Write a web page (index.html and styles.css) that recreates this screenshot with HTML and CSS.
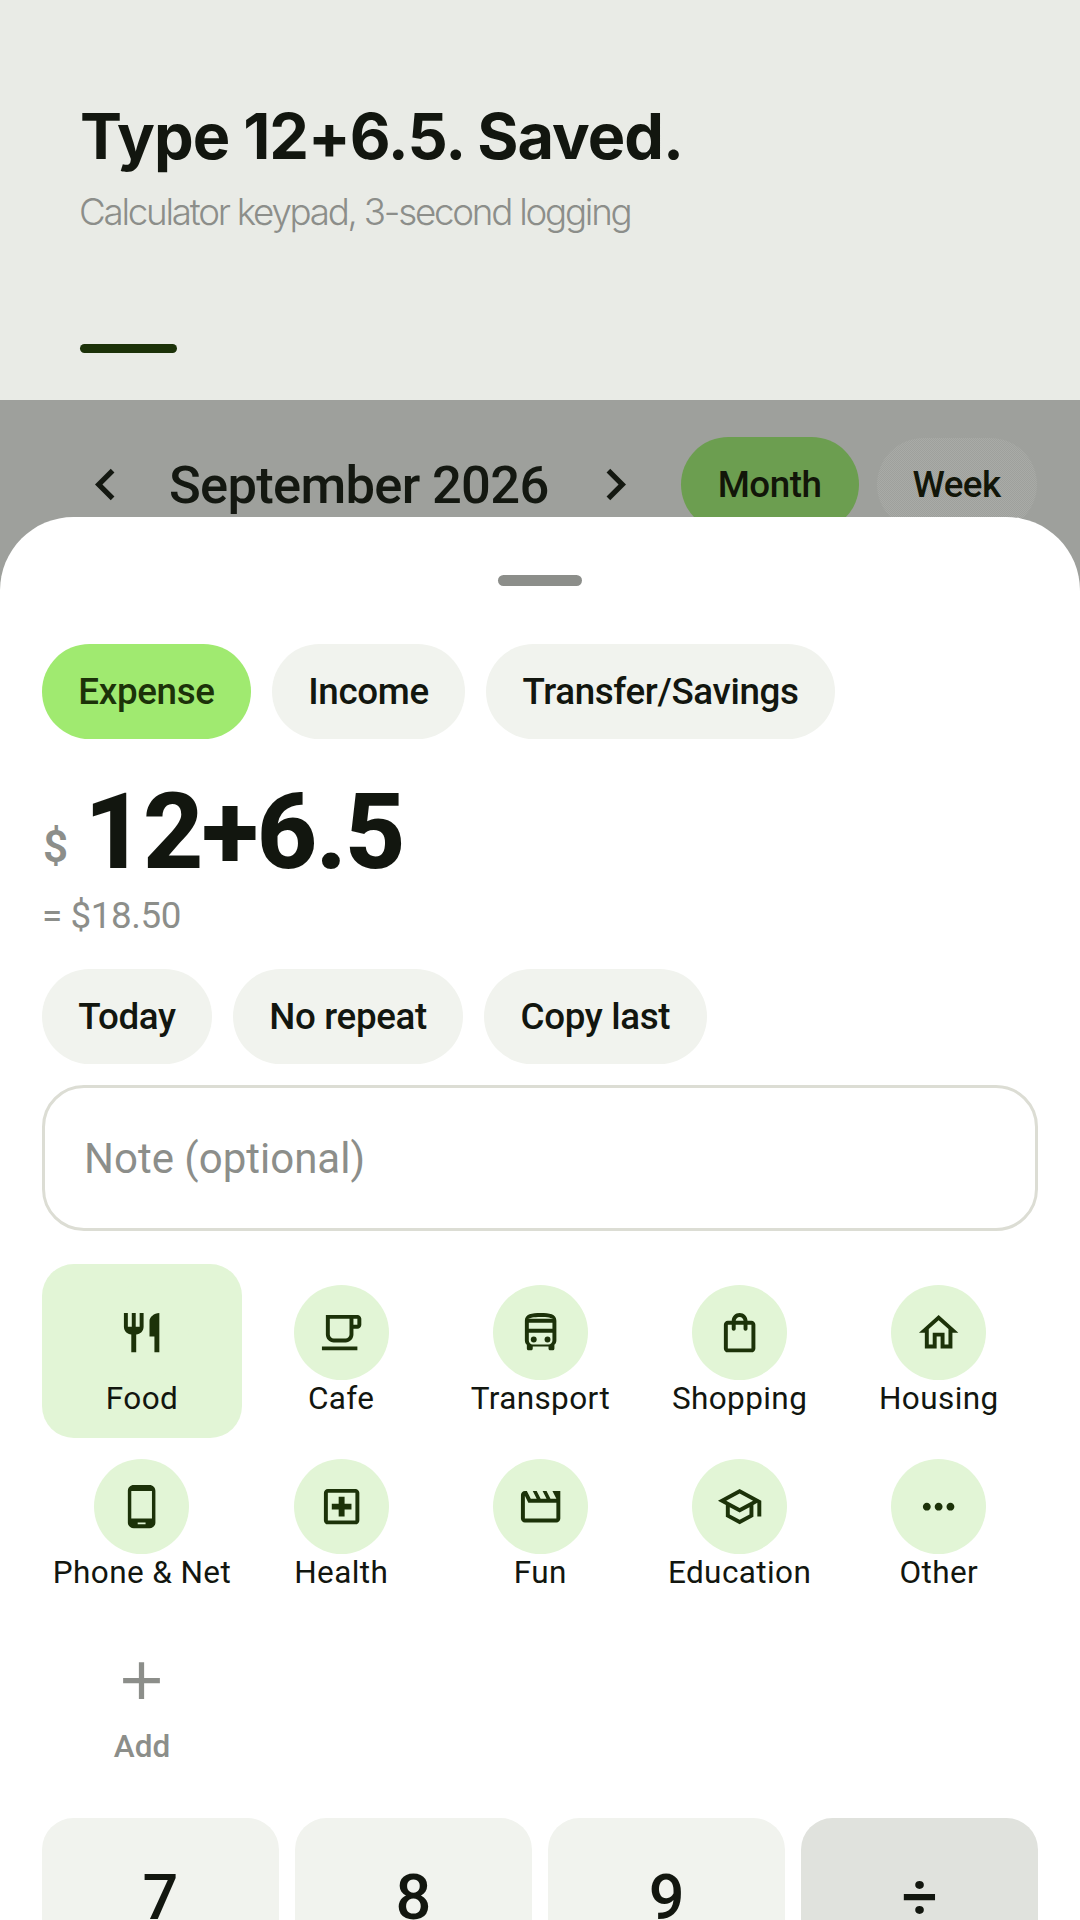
FILE: index.html
```html
<!DOCTYPE html>
<html lang="en">
<head>
<meta charset="utf-8">
<title>Type 12+6.5. Saved.</title>
<link rel="stylesheet" href="styles.css">
</head>
<body>
<div class="screen">
  <header class="hero">
    <h1 class="hero-title">Type 12+6.5. Saved.</h1>
    <p class="hero-sub">Calculator keypad, 3-second logging</p>
    <div class="hero-bar"></div>
  </header>
  <div class="stage">
    <div class="toolbar">
      <svg class="chev" viewBox="0 0 24 24"><path d="M15.41 7.41L14 6l-6 6 6 6 1.41-1.41L10.83 12z"/></svg>
      <span class="month-title">September 2026</span>
      <svg class="chev" viewBox="0 0 24 24"><path d="M10 6L8.59 7.41 13.17 12l-4.58 4.59L10 18l6-6z"/></svg>
      <span class="seg seg-on">Month</span>
      <span class="seg seg-off">Week</span>
    </div>
    <section class="sheet">
      <div class="handle"></div>
      <div class="chips">
        <span class="chip chip-on">Expense</span>
        <span class="chip">Income</span>
        <span class="chip">Transfer/Savings</span>
      </div>
      <div class="amount"><span class="cur">$</span><span class="expr">12+6.5</span></div>
      <div class="result">= $18.50</div>
      <div class="chips chips-meta">
        <span class="chip">Today</span>
        <span class="chip">No repeat</span>
        <span class="chip">Copy last</span>
      </div>
      <div class="note">Note (optional)</div>
      <div class="cats">
        <div class="cat cat-on">
          <span class="cat-ic"><svg viewBox="0 0 24 24"><path d="M11 9H9V2H7v7H5V2H3v7c0 2.12 1.66 3.84 3.75 3.97V22h2.5v-9.03C11.34 12.84 13 11.12 13 9V2h-2v7zm5-3v8h2.5v8H21V2c-2.76 0-5 2.24-5 4z"/></svg></span>
          <span class="cat-name">Food</span>
        </div>
        <div class="cat">
          <span class="cat-ic"><svg viewBox="0 0 24 24"><path d="M20 3H4v10c0 2.21 1.79 4 4 4h6c2.21 0 4-1.79 4-4v-3h2c1.11 0 2-.9 2-2V5c0-1.11-.89-2-2-2zm-4 10c0 1.1-.9 2-2 2H8c-1.1 0-2-.9-2-2V5h10v8zm4-5h-2V5h2v3zM2 19h18v2H2z"/></svg></span>
          <span class="cat-name">Cafe</span>
        </div>
        <div class="cat">
          <span class="cat-ic"><svg viewBox="0 0 24 24"><path fill-rule="evenodd" d="M4 16c0 .88.39 1.67 1 2.22V20c0 .55.45 1 1 1h1c.55 0 1-.45 1-1v-1h8v1c0 .55.45 1 1 1h1c.55 0 1-.45 1-1v-1.78c.61-.55 1-1.34 1-2.22V6c0-3.5-3.58-4-8-4s-8 .5-8 4v10zM12 4c3.69 0 5.61.46 6.33 1H5.67c.72-.54 2.64-1 6.33-1zM6 7h12v3H6zM6 12h12v4c0 1.1-.9 2-2 2H8c-1.1 0-2-.9-2-2z"/><circle cx="8.5" cy="15.5" r="1.5"/><circle cx="15.5" cy="15.5" r="1.5"/></svg></span>
          <span class="cat-name">Transport</span>
        </div>
        <div class="cat">
          <span class="cat-ic"><svg viewBox="0 0 24 24"><path d="M18 6h-2c0-2.21-1.79-4-4-4S8 3.79 8 6H6c-1.1 0-2 .9-2 2v12c0 1.1.9 2 2 2h12c1.1 0 2-.9 2-2V8c0-1.1-.9-2-2-2zm-6-2c1.1 0 2 .9 2 2h-4c0-1.1.9-2 2-2zm6 16H6V8h2v2c0 .55.45 1 1 1s1-.45 1-1V8h4v2c0 .55.45 1 1 1s1-.45 1-1V8h2v12z"/></svg></span>
          <span class="cat-name">Shopping</span>
        </div>
        <div class="cat">
          <span class="cat-ic"><svg viewBox="0 0 24 24"><path d="M12 5.69l5 4.5V18h-2v-6H9v6H7v-7.81l5-4.5M12 3L2 12h3v8h6v-6h2v6h6v-8h3L12 3z"/></svg></span>
          <span class="cat-name">Housing</span>
        </div>
        <div class="cat">
          <span class="cat-ic"><svg viewBox="0 0 24 24"><path d="M16 1H8C6.34 1 5 2.34 5 4v16c0 1.66 1.34 3 3 3h8c1.66 0 3-1.34 3-3V4c0-1.66-1.34-3-3-3zm-2 20h-4v-1h4v1zm3.25-3H6.75V4h10.5v14z"/></svg></span>
          <span class="cat-name">Phone &amp; Net</span>
        </div>
        <div class="cat">
          <span class="cat-ic"><svg viewBox="0 0 24 24"><path d="M19 3H5c-1.1 0-1.99.9-1.99 2L3 19c0 1.1.9 2 2 2h14c1.1 0 2-.9 2-2V5c0-1.1-.9-2-2-2zm0 16H5V5h14v14z"/><path d="M10.5 17h3v-3.5H17v-3h-3.5V7h-3v3.5H7v3h3.5z"/></svg></span>
          <span class="cat-name">Health</span>
        </div>
        <div class="cat">
          <span class="cat-ic"><svg viewBox="0 0 24 24"><path d="M4 6.47L5.76 10H20v8H4V6.47M22 4h-4l2 4h-3l-2-4h-2l2 4h-3l-2-4H8l2 4H7L5 4H4c-1.1 0-1.99.9-1.99 2L2 18c0 1.1.9 2 2 2h16c1.1 0 2-.9 2-2V4z"/></svg></span>
          <span class="cat-name">Fun</span>
        </div>
        <div class="cat">
          <span class="cat-ic"><svg viewBox="0 0 24 24"><path d="M12 3L1 9l4 2.18v6L12 21l7-3.82v-6l2-1.09V17h2V9L12 3zm6.82 6L12 12.72 5.18 9 12 5.28 18.82 9zM17 15.99l-5 2.73-5-2.73v-3.72L12 15l5-2.73v3.72z"/></svg></span>
          <span class="cat-name">Education</span>
        </div>
        <div class="cat">
          <span class="cat-ic"><svg viewBox="0 0 24 24"><path d="M6 10c-1.1 0-2 .9-2 2s.9 2 2 2 2-.9 2-2-.9-2-2-2zm12 0c-1.1 0-2 .9-2 2s.9 2 2 2 2-.9 2-2-.9-2-2-2zm-6 0c-1.1 0-2 .9-2 2s.9 2 2 2 2-.9 2-2-.9-2-2-2z"/></svg></span>
          <span class="cat-name">Other</span>
        </div>
        <div class="cat cat-add">
          <span class="cat-ic cat-ic-add"><svg viewBox="0 0 24 24"><path d="M19 13h-6v6h-2v-6H5v-2h6V5h2v6h6v2z"/></svg></span>
          <span class="cat-name">Add</span>
        </div>
      </div>
      <div class="keys">
        <span class="key">7</span>
        <span class="key">8</span>
        <span class="key">9</span>
        <span class="key key-op">÷</span>
      </div>
    </section>
  </div>
</div>
</body>
</html>
```

FILE: styles.css
```css
* { box-sizing: border-box; }
html, body { margin: 0; padding: 0; }
body { width: 1080px; height: 1920px; overflow: hidden; background: #fff; font-family: Roboto, "Liberation Sans", sans-serif; color: #12160f; }
.screen { width: 1080px; height: 1920px; display: flex; flex-direction: column; overflow: hidden; }

.hero { height: 400px; flex: none; background: #e9ebe6; padding: 100px 80px 0; display: flex; flex-direction: column; font-family: Inter, "Liberation Sans", sans-serif; }
.hero-title { margin: 0; font-size: 63px; line-height: 73px; font-weight: 700; letter-spacing: -1px; color: #12160f; }
.hero-sub { margin: 17px 0 0 -1px; font-size: 36.75px; line-height: 44px; font-weight: 300; letter-spacing: -2.25px; color: #8c8e8a; }
.hero-bar { width: 97px; height: 9px; border-radius: 5px; background: #1c3209; margin-top: 110px; }

.stage { position: relative; flex: 1; background: #9ea09c; overflow: hidden; }
.toolbar { height: 95px; margin-top: 37px; padding-left: 74px; display: flex; align-items: center; }
.chev { width: 63px; height: 63px; flex: none; fill: #141811; }
.month-title { font-size: 52.5px; font-weight: 500; letter-spacing: -0.7px; margin: 0 35px 0 32px; color: #141811; white-space: nowrap; }
.seg { height: 95px; border-radius: 48px; display: flex; align-items: center; justify-content: center; font-size: 36.75px; font-weight: 500; letter-spacing: -0.5px; color: #121609; }
.seg-on { width: 178px; background: #6c9e50; margin-left: 34px; }
.seg-off { width: 160px; height: 93px; margin-left: 18px; background-color: #9ea09c; background-image: repeating-conic-gradient(#9ea09c 0 25%, #a9aba7 0 50%); background-size: 2px 2px; }

.sheet { position: absolute; left: 0; right: 0; top: 117px; bottom: 0; background: #fff; border-radius: 73.5px 73.5px 0 0; padding: 58px 42px 0; }
.handle { width: 84px; height: 11px; border-radius: 6px; background: #8c8e8a; margin: 0 auto 58px; }
.chips { display: flex; gap: 21px; }
.chip { height: 95px; padding: 0 36.35px; border-radius: 48px; background: #f1f3ee; display: flex; align-items: center; font-size: 36.75px; font-weight: 500; letter-spacing: -0.35px; color: #12160f; white-space: nowrap; }
.chip-on { background: #a0ea70; color: #1c3209; }
.amount { margin-top: 32px; height: 123px; display: flex; align-items: flex-start; }
.cur { font-size: 44px; line-height: 52px; font-weight: 600; color: #8c8e8a; margin: 50px 16px 0 1px; }
.expr { font-size: 105px; font-weight: 800; line-height: 123px; color: #12160f; letter-spacing: -1.7px; }
.result { font-size: 36.75px; line-height: 43px; letter-spacing: -0.4px; color: #8c8e8a; }
.chips-meta { margin-top: 32px; }
.note { margin-top: 21px; height: 146px; border: 3px solid #dcddd4; border-radius: 42px; padding-left: 39px; display: flex; align-items: center; font-size: 42px; color: #8c8e8a; }

.cats { margin: 33px -0.4px 0 0.4px; display: grid; grid-template-columns: repeat(5, 1fr); grid-auto-rows: 174px; }
.cat { display: flex; flex-direction: column; align-items: center; padding-top: 21px; border-radius: 32px; }
.cat-on { background: #e2f5d6; }
.cat-ic { width: 95px; height: 95px; border-radius: 50%; background: #e2f5d6; display: flex; align-items: center; justify-content: center; }
.cat-ic svg { width: 47.25px; height: 47.25px; fill: #1c3209; }
.cat-name { font-size: 31.5px; line-height: 37px; font-weight: 400; letter-spacing: 0.4px; color: #12160f; white-space: nowrap; }
.cat-ic-add { background: none; }
.cat-ic-add svg { width: 63px; height: 63px; fill: #8c8e8a; }
.cat-add .cat-name { color: #8c8e8a; font-weight: 500; letter-spacing: 0; }

.keys { margin-top: 32px; display: grid; grid-template-columns: repeat(4, 1fr); gap: 16.5px; }
.key { height: 158px; border-radius: 31.5px; background: #f1f3ee; display: flex; align-items: center; justify-content: center; font-size: 63px; font-weight: 500; color: #12160f; }
.key-op { background: #e0e2dd; }
```
